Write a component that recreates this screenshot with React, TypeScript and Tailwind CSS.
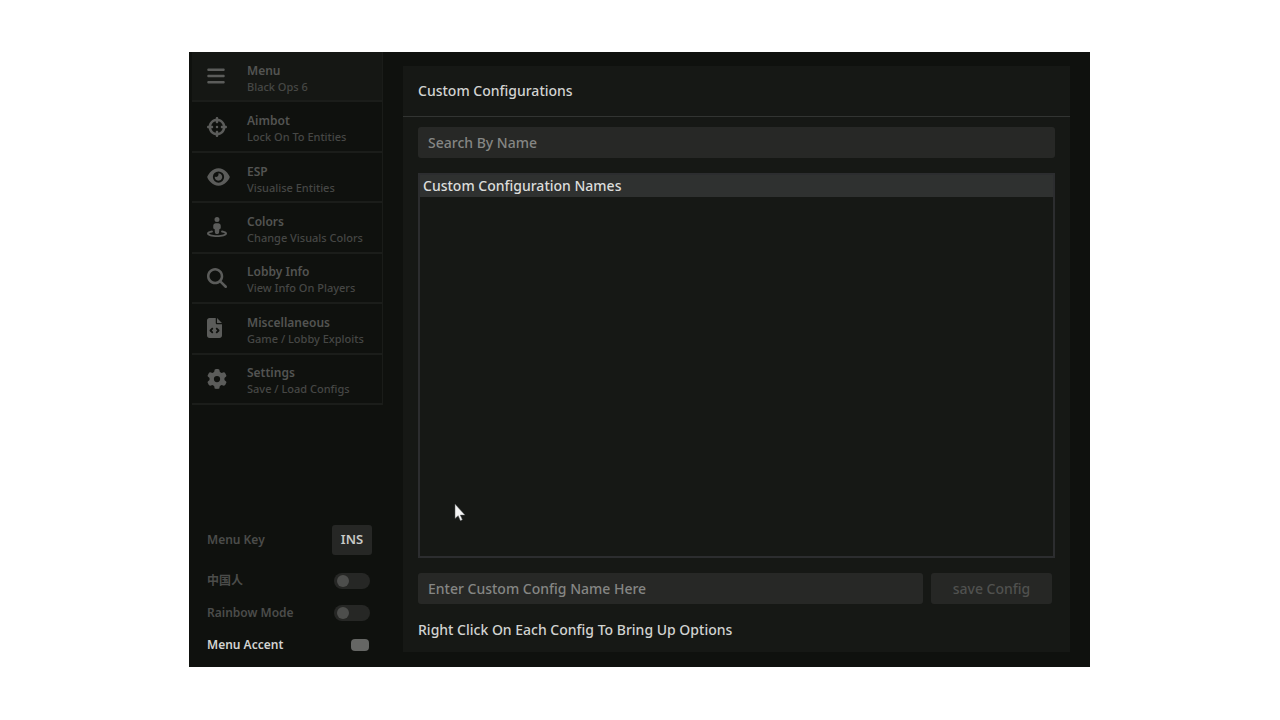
import clsx from 'clsx';
import { useState } from 'react';
import {
  FaBars,
  FaCrosshairs,
  FaEye,
  FaFileCode,
  FaGear,
  FaMagnifyingGlass,
  FaStreetView,
} from 'react-icons/fa6';

const navItems = [
  { name: 'Menu', desc: 'Black Ops 6', icon: FaBars, width: 'w-[18px]' },
  {
    name: 'Aimbot',
    desc: 'Lock On To Entities',
    icon: FaCrosshairs,
    width: 'w-5',
  },
  { name: 'ESP', desc: 'Visualise Entities', icon: FaEye, width: 'w-[23px]' },
  {
    name: 'Colors',
    desc: 'Change Visuals Colors',
    icon: FaStreetView,
    width: 'w-5',
  },
  {
    name: 'Lobby Info',
    desc: 'View Info On Players',
    icon: FaMagnifyingGlass,
    width: 'w-5',
  },
  {
    name: 'Miscellaneous',
    desc: 'Game / Lobby Exploits',
    icon: FaFileCode,
    width: 'w-[15px]',
  },
  { name: 'Settings', desc: 'Save / Load Configs', icon: FaGear, width: 'w-5' },
];

const toggles = [
  { id: 'chinese', label: '中国人' },
  { id: 'rainbow', label: 'Rainbow Mode' },
];

function Sidebar() {
  const [active, setActive] = useState('Menu');
  const [accent, setAccent] = useState('#656664');

  return (
    <aside className="flex w-[214px] shrink-0 flex-col">
      <nav className="ml-[3px] grid h-[353px] w-[191px] grid-rows-7 border-r border-[#1a1c19]">
        {navItems.map((item) => (
          <button
            key={item.name}
            type="button"
            onClick={() => setActive(item.name)}
            className={clsx(
              'flex items-center border-b-2 border-[#1b1d1a] pl-[15px] text-left',
              active === item.name && 'bg-[#151714]'
            )}
          >
            <span className="flex w-10 shrink-0">
              <item.icon className={clsx('h-5 text-[#5b5c5a]', item.width)} />
            </span>
            <span className="flex flex-col pt-1 whitespace-nowrap">
              <span className="text-xs leading-[17px] font-semibold text-[#535452]">
                {item.name}
              </span>
              <span className="text-[11px] leading-4 font-medium text-[#464745]">
                {item.desc}
              </span>
            </span>
          </button>
        ))}
      </nav>
      <div className="mt-auto flex flex-col pr-[31px] pb-[6px] pl-[18px] text-xs font-semibold text-[#4b4c4a]">
        <div className="mb-[10px] flex h-[30px] items-center justify-between">
          <span id="menu-key">Menu Key</span>
          <button
            type="button"
            aria-describedby="menu-key"
            className="h-[30px] w-10 rounded-[3px] bg-[#262725] text-[13px] font-semibold text-[#c9cac8]"
          >
            INS
          </button>
        </div>
        {toggles.map((item) => (
          <div key={item.id} className="flex h-8 items-center justify-between">
            <label htmlFor={item.id}>{item.label}</label>
            <input
              id={item.id}
              type="checkbox"
              className="mr-[2px] flex h-4 w-9 appearance-none items-center rounded-full bg-[#262725] px-[3px] before:h-3 before:w-3 before:rounded-full before:bg-[#4d4e4c] checked:justify-end"
            />
          </div>
        ))}
        <div className="flex h-8 items-center justify-between">
          <label htmlFor="accent" className="text-[#d2d3d1]">
            Menu Accent
          </label>
          <input
            id="accent"
            type="color"
            value={accent}
            onChange={(e) => setAccent(e.target.value)}
            className="mr-[3px] h-3 w-[18px] appearance-none overflow-hidden rounded-sm [&::-webkit-color-swatch]:border-0 [&::-webkit-color-swatch-wrapper]:p-0"
          />
        </div>
      </div>
    </aside>
  );
}

function ConfigPanel() {
  return (
    <main className="mt-[14px] mr-5 mb-[15px] flex min-w-0 flex-1 flex-col bg-[#161815]">
      <header className="flex h-[51px] items-center border-b border-[#323432] px-[15px]">
        <h1 className="text-sm font-medium text-[#d2d3d1]">
          Custom Configurations
        </h1>
      </header>
      <div className="flex flex-1 flex-col px-[15px] pt-[10px] pb-3">
        <input
          type="search"
          aria-label="Search By Name"
          placeholder="Search By Name"
          className="h-[31px] w-full rounded-[3px] bg-[#272826] px-[10px] text-sm font-medium text-[#d2d3d1] placeholder:text-[#858684]"
        />
        <div className="relative mt-[15px] flex-1 border-2 border-[#2c2d2f]">
          <table className="w-full">
            <thead>
              <tr className="h-[22px] bg-[#2f3130]">
                <th className="px-[3px] py-0 text-left text-sm font-medium text-[#dcdddb]">
                  Custom Configuration Names
                </th>
              </tr>
            </thead>
            <tbody />
          </table>
          <svg
            viewBox="0 0 12 19"
            className="absolute bottom-[34px] left-[34px] h-[19px] w-3"
          >
            <path
              d="M1 1v14.5l3.2-2.8 2.2 5 2-1-2.1-4.6H11z"
              fill="#f4f4f4"
              stroke="#55585a"
              strokeWidth="0.5"
            />
          </svg>
        </div>
        <form
          onSubmit={(e) => e.preventDefault()}
          className="mt-[15px] flex gap-2 pr-[3px]"
        >
          <input
            type="text"
            aria-label="Enter Custom Config Name Here"
            placeholder="Enter Custom Config Name Here"
            className="h-[31px] min-w-0 flex-1 rounded-[3px] bg-[#272826] px-[10px] text-sm font-medium text-[#d2d3d1] placeholder:text-[#858684]"
          />
          <button
            type="submit"
            className="h-[31px] w-[121px] rounded-[3px] bg-[#262725] text-sm font-medium text-[#50514f]"
          >
            save Config
          </button>
        </form>
        <p className="mt-4 text-sm font-medium text-[#d2d3d1]">
          Right Click On Each Config To Bring Up Options
        </p>
      </div>
    </main>
  );
}

export default function App() {
  return (
    <div className="flex min-h-screen items-center justify-center bg-white pr-px pb-px font-['Noto_Sans','Noto_Sans_CJK_SC',sans-serif]">
      <div className="flex min-h-[615px] w-full max-w-[901px] bg-[#0f110e]">
        <Sidebar />
        <ConfigPanel />
      </div>
    </div>
  );
}
